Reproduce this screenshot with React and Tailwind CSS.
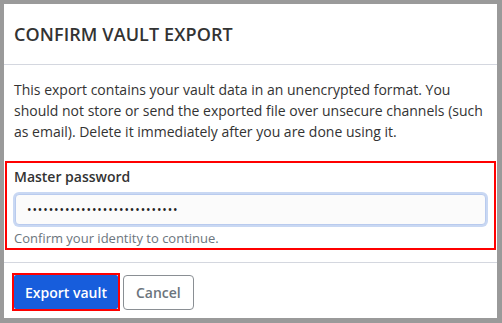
import React from 'react';

export default function App() {
    return (
        <div className="w-[502px] h-[323px] bg-[#9a9a9a] pt-[4px] pl-[4px] pr-[5px] pb-[5px]" style={{ fontFamily: '"Open Sans", sans-serif' }}>
            <div className="bg-white h-full flex flex-col">
                <div className="h-[61px] flex items-center px-[10px] border-b border-[#d4d7df]">
                    <h1 className="text-[18px] font-semibold text-[#333] tracking-[0.1px]">CONFIRM VAULT EXPORT</h1>
                </div>

                <div className="px-[10px] pt-[14px]">
                    <p className="text-[14px] leading-[21px] text-[#333]">
                        This export contains your vault data in an unencrypted format. You should not store or send the exported file over unsecure channels (such as email). Delete it immediately after you are done using it.
                    </p>
                </div>

                <div className="mx-[1px] mt-[19px] border-2 border-[#ff0000] px-[7px] pt-[4px] pb-[1px]">
                    <label className="block text-[14px] leading-[19px] font-semibold text-[#333] mb-[8px]">Master password</label>
                    <div className="mx-[1px] h-[31px] rounded-[4px] bg-[#fbfbfb] border border-[#b9cbee] ring-2 ring-[#c9d8f3] flex items-center px-[11px]">
                        <span className="text-[12px] tracking-[0.9px] text-[#222] leading-none">••••••••••••••••••••••••••••</span>
                    </div>
                    <p className="text-[13px] text-[#6c757d] mt-[5px] leading-[17px]">Confirm your identity to continue.</p>
                </div>

                <div className="mt-[12px] border-t border-[#d4d7df] flex items-center gap-[3px] px-[8px] pt-[10px]">
                    <div className="border-2 border-[#ff0000]">
                        <button className="h-[34px] px-[11px] bg-[#175ddc] text-white text-[14px] font-semibold rounded-[2px]">Export vault</button>
                    </div>
                    <button className="h-[35px] px-[12px] bg-white text-[#6c757d] text-[14px] font-semibold border border-[#8a8f94] rounded-[4px]">Cancel</button>
                </div>
            </div>
        </div>
    );
}
